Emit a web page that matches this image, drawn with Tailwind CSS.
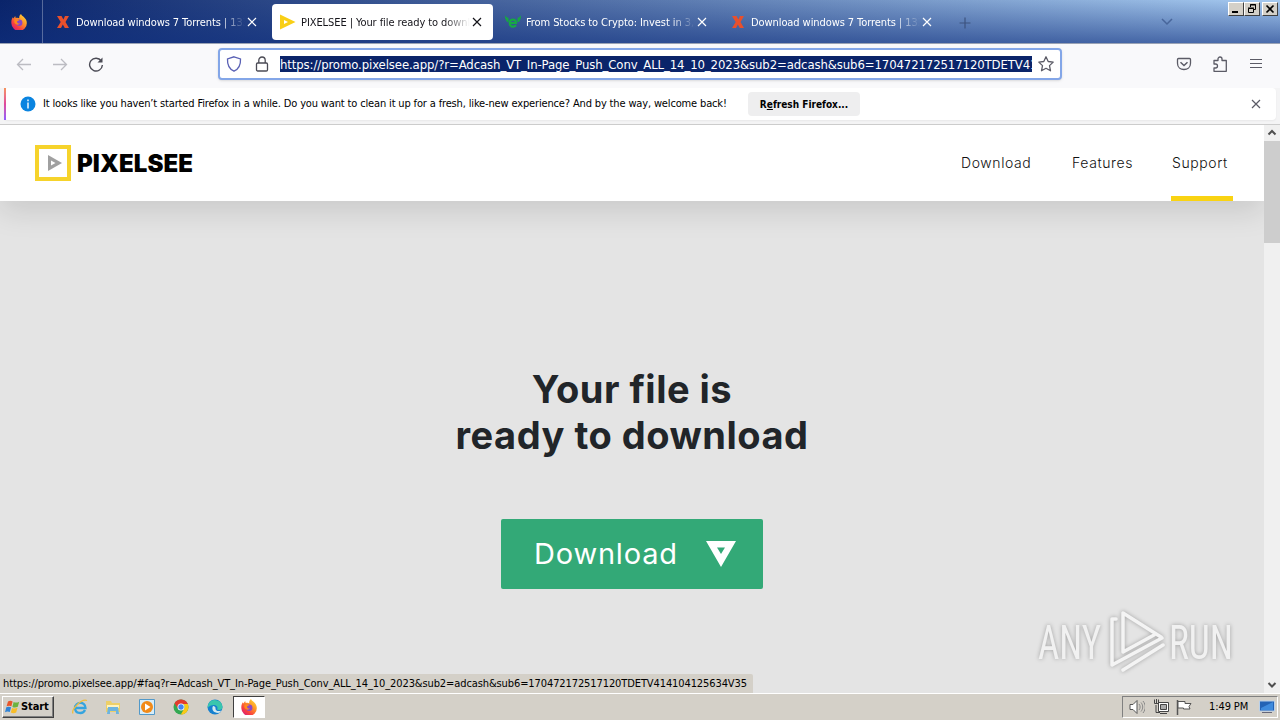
<!DOCTYPE html>
<html lang="en">
<head>
    <meta charset="UTF-8">
    <meta name="viewport" content="width=device-width, initial-scale=1.0">
    <title>PIXELSEE | Your file ready to download</title>
    <script src="https://cdn.jsdelivr.net/npm/@tailwindcss/browser@4"></script>
</head>
<body class="w-[1280px] h-[720px] overflow-hidden flex flex-col bg-[#e4e4e4] font-['DejaVu_Sans_Condensed','DejaVu_Sans',sans-serif] font-stretch-condensed text-[11px] text-black whitespace-nowrap">
    <!-- shared icons -->
    <svg class="absolute w-0 h-0">
        <defs>
            <linearGradient id="flame" x1="1" y1="0" x2="0.2" y2="1">
                <stop offset="0" stop-color="#ffe840"/>
                <stop offset="0.4" stop-color="#ff9a26"/>
                <stop offset="0.75" stop-color="#f9403f"/>
                <stop offset="1" stop-color="#d51c7e"/>
            </linearGradient>
        </defs>
        <symbol id="firefox" viewBox="0 0 16 16">
            <path d="M10 0c.6 1.400 1.700 2 2.800 3.100C14.800 5 15.800 6.800 15.800 9a7.600 7.600 0 0 1-15.400.4c-.3-2.500.3-4.600 1.500-6.100l.5 1.200L4.200 2l.5 2.100c1.300-.6 2.600-.4 3.500.1C8 2.500 8.800 1 10 0z" fill="url(#flame)"/>
            <circle cx="8.200" cy="8.800" r="3.200" fill="#8a48c8"/>
            <path d="M3.500 5.700c2-.8 3.600.2 5.100.6-.8.2-1.400.8-2.600 1.100 0 1.600 1.400 2.400 3 1.900-.8 1.500-2.800 2-4.300.8C3.300 9 3 7.300 3.500 5.700z" fill="#ff8a1c"/>
        </symbol>
        <symbol id="close" viewBox="0 0 10 10">
            <path d="M1 1l8 8M9 1L1 9" fill="none" stroke="currentColor" stroke-width="1.200"/>
        </symbol>
        <symbol id="xfav" viewBox="0 0 16 16">
            <path d="M2 2h4.500L8.400 5.500 10 2h4l-3.500 6L14 14H9.800L7.800 10.400 6 14H2l3.700-6z" fill="#e8502c"/>
        </symbol>
    </svg>

    <!-- tab strip -->
    <div class="h-[44px] shrink-0 flex items-start bg-[linear-gradient(to_bottom,transparent,#0f2f7e99),linear-gradient(to_right,#0a246a,#a6caf0)] border-b border-[#9aa3b5] text-white">
        <div class="w-[43px] h-[43px] flex items-center justify-center border-r border-white/30 pr-1">
            <svg class="w-4 h-4"><use href="#firefox"/></svg>
        </div>
        <div class="flex pl-1 pt-1 gap-1">
            <div class="w-[221px] h-9 flex items-center pl-2">
                <svg class="w-4 h-4"><use href="#xfav"/></svg>
                <span class="ml-[5px] w-[169px] pt-[2px] overflow-hidden tracking-[-0.08px] mask-r-from-85% mask-r-to-100%">Download windows 7 Torrents | 1337x</span>
                <svg class="w-[10px] h-[10px] ml-[2px]"><use href="#close"/></svg>
            </div>
            <div class="w-[221px] h-9 flex items-center pl-2 bg-white text-[#15141a] rounded-sm">
                <svg class="w-4 h-4" viewBox="0 0 16 16"><path d="M0 0.500L15.500 8 0 15.500z" fill="#f9cf16"/><path d="M4 6l4 2-4 2z" fill="#fff"/></svg>
                <span class="ml-[5px] w-[169px] pt-[2px] overflow-hidden tracking-[-0.08px] mask-r-from-85% mask-r-to-100%">PIXELSEE | Your file ready to download</span>
                <svg class="w-[10px] h-[10px] ml-[2px]"><use href="#close"/></svg>
            </div>
            <div class="w-[221px] h-9 flex items-center pl-2">
                <svg class="w-4 h-4" viewBox="0 0 16 16"><path d="M0 1c.7 2 1.800 2.500 3.500 3v4.500C1 7.500-.2 4.500 0 1zM16 1c-.7 2-1.800 2.500-3.500 3v4.500C15 7.500 16.200 4.500 16 1z" fill="#17a844"/><path d="M5 9h6c0-4.600-6.300-4.600-6.300 0 0 4.200 4.300 4.600 6.300 2.300" fill="none" stroke="#17a844" stroke-width="2.200"/></svg>
                <span class="ml-[5px] w-[169px] pt-[2px] overflow-hidden tracking-[-0.08px] mask-r-from-85% mask-r-to-100%">From Stocks to Crypto: Invest in 3,000+</span>
                <svg class="w-[10px] h-[10px] ml-[2px]"><use href="#close"/></svg>
            </div>
            <div class="w-[221px] h-9 flex items-center pl-2">
                <svg class="w-4 h-4"><use href="#xfav"/></svg>
                <span class="ml-[5px] w-[169px] pt-[2px] overflow-hidden tracking-[-0.08px] mask-r-from-85% mask-r-to-100%">Download windows 7 Torrents | 1337x</span>
                <svg class="w-[10px] h-[10px] ml-[2px]"><use href="#close"/></svg>
            </div>
        </div>
        <svg class="w-3 h-3 ml-[16px] mt-[17px]" viewBox="0 0 12 12"><path d="M6 0.500v11M0.500 6h11" stroke="#3d537f" stroke-width="1.200"/></svg>
        <svg class="w-3 h-2 ml-[190px] mt-[18px]" viewBox="0 0 12 8"><path d="M1 1l5 5 5-5" fill="none" stroke="#48669b" stroke-width="1.500"/></svg>
        <div class="flex ml-auto mr-[2px] mt-[2px]">
            <div class="w-4 h-[14px] bg-[#d4d0c8] border border-t-white border-l-white border-r-[#404040] border-b-[#404040]">
                <svg class="w-[14px] h-3" viewBox="0 0 14 12"><path d="M3 8h6v2H3z"/></svg>
            </div>
            <div class="w-4 h-[14px] bg-[#d4d0c8] border border-t-white border-l-white border-r-[#404040] border-b-[#404040]">
                <svg class="w-[14px] h-3" viewBox="0 0 14 12" fill="none" stroke="#000"><path d="M5.500 4V1.500h5v5H9M5 2h6M3.500 5.500h5v4h-5zM3 5h6"/></svg>
            </div>
            <div class="w-4 h-[14px] ml-[2px] bg-[#d4d0c8] border border-t-white border-l-white border-r-[#404040] border-b-[#404040]">
                <svg class="w-[14px] h-3" viewBox="0 0 14 12"><path d="M3.500 2.500l7 7M10.500 2.500l-7 7" stroke="#000" stroke-width="1.700"/></svg>
            </div>
        </div>
    </div>

    <!-- navigation toolbar -->
    <div class="h-[44px] shrink-0 flex items-start bg-[#f9f9fb] text-[#5b5b66]">
        <svg class="w-4 h-4 ml-4 mt-3" viewBox="0 0 16 16" fill="none" stroke="#bcbcc2" stroke-width="1.300"><path d="M15 8.500H1.500M7 3L1.500 8.500 7 14"/></svg>
        <svg class="w-4 h-4 ml-5 mt-3" viewBox="0 0 16 16" fill="none" stroke="#bcbcc2" stroke-width="1.300"><path d="M1 8.500h13.500M9 3l5.500 5.500L9 14"/></svg>
        <svg class="w-4 h-4 ml-5 mt-3" viewBox="0 0 16 16" fill="none" stroke="#4b4b55" stroke-width="1.400"><path d="M13.300 5A6.400 6.400 0 1 0 14.400 9"/><path d="M14.500 1.500v5h-5z" fill="#4b4b55" stroke="none"/></svg>
        <div class="w-[844px] h-[32px] ml-[114px] mt-1 flex items-center bg-white border-2 border-[#83a6e8] rounded-sm shadow-sm">
            <svg class="w-4 h-4 ml-[6px]" viewBox="0 0 16 16" fill="none" stroke="#5a61b5" stroke-width="1.300"><path d="M8 .8l6.500 2.200c.3 5.500-1.700 10-6.500 12.200C3.200 13 1.200 8.500 1.500 3z"/></svg>
            <svg class="w-4 h-4 ml-3" viewBox="0 0 16 16" fill="none" stroke="#4b4b55" stroke-width="1.300"><rect x="2.500" y="7" width="11" height="8" rx="1.200"/><path d="M4.800 7V4.200a3.200 3.200 0 0 1 6.400 0V7"/></svg>
            <div class="w-[752px] h-4 ml-[10px] overflow-hidden bg-[#0a246a] text-white text-[13px] leading-[17px] tracking-[-0.1px]">https://promo.pixelsee.app/?r=Adcash_VT_In-Page_Push_Conv_ALL_14_10_2023&amp;sub2=adcash&amp;sub6=170472172517120TDETV414104125634V35</div>
            <svg class="w-4 h-4 ml-[6px]" viewBox="0 0 16 16" fill="none" stroke="#5b5b66" stroke-width="1.300" stroke-linejoin="round"><path d="M8 .8l2.200 4.700 5 .6-3.700 3.500 1 5.200L8 12.300l-4.500 2.500 1-5.200L.8 6.100l5-.6z"/></svg>
        </div>
        <svg class="w-4 h-4 ml-[114px] mt-[12px]" viewBox="0 0 16 16" fill="none" stroke="#5b5b66" stroke-width="1.300"><path d="M2.500 2.500h11c.7 0 1 .4 1 1v3.700c0 8.400-13 8.400-13 0V3.500c0-.6.4-1 1-1z"/><path d="M4.500 6.200L8 9.500l3.500-3.300" stroke-width="1.500"/></svg>
        <svg class="w-4 h-4 ml-[20px] mt-[12px]" viewBox="0 0 16 16" fill="none" stroke="#5b5b66" stroke-width="1.300" stroke-linejoin="round"><path d="M2 7V4.500h4V3a2 2 0 0 1 4 0v1.500h4.300V15.300H2V12h1.500a2 2 0 0 0 0-4H2z"/></svg>
        <svg class="w-3 h-3 ml-[22px] mt-[14px]" viewBox="0 0 12 12" stroke="#5b5b66" stroke-width="1.200"><path d="M0 1.500h12M0 5.500h12M0 9.500h12"/></svg>
    </div>

    <!-- notification bar -->
    <div class="h-[37px] shrink-0 bg-[#f4f4f5] border-b border-[#cccccc] pl-1 pr-1">
        <div class="h-8 flex items-center bg-white rounded-sm shadow-xs">
            <div class="w-[2px] h-8 bg-linear-to-b from-[#f6935c] via-[#e0489b] to-[#9059ff]"></div>
            <svg class="w-4 h-4 ml-[14px]" viewBox="0 0 16 16"><circle cx="8" cy="8" r="7.500" fill="#0a84e0"/><path d="M8 3.500v1.700M8 6.500v6" stroke="#fff" stroke-width="1.400"/></svg>
            <span class="w-[685px] ml-[7px] tracking-[-0.15px]">It looks like you haven’t started Firefox in a while. Do you want to clean it up for a fresh, like-new experience? And by the way, welcome back!</span>
            <div class="w-28 h-6 ml-5 flex items-center justify-center rounded-sm bg-[#eeeeef] font-bold text-[10px]"><span>R<u>e</u>fresh Firefox...</span></div>
            <svg class="w-[10px] h-[10px] ml-auto mr-[15px] text-[#5b5b66]"><use href="#close"/></svg>
        </div>
    </div>

    <!-- web page -->
    <div class="h-[568px] shrink-0 flex relative">
        <div class="w-[1264px] flex flex-col overflow-hidden bg-[#e4e4e4] font-[Inter,sans-serif]">
            <header class="h-[76px] shrink-0 flex items-start bg-white pl-[35px] shadow-[0_10px_30px_rgba(0,0,0,0.12)]">
                <svg class="w-9 h-9 mt-5" viewBox="0 0 36 36"><path d="M2 2h32v32H2z" fill="#fff" stroke="#f6d32b" stroke-width="4"/><path d="M13 10l14 8-14 8z" fill="#a0a0a0"/><path d="M16 15.500l4.500 2.500-4.500 2.500z" fill="#fff"/></svg>
                <span class="w-[118px] ml-[6px] mt-[23px] text-[24px] leading-[32px] font-black tracking-[0.1px]">PIXELSEE</span>
                <nav class="flex ml-auto mr-[31px] text-[14px] leading-[76px] font-light tracking-[0.6px] text-[#111]">
                    <span class="w-[71px] mr-10">Download</span>
                    <span class="w-[60px] mr-[39px]">Features</span>
                    <span class="w-[62px] h-[76px] pl-px border-b-[5px] border-[#f9d312]">Support</span>
                </nav>
            </header>
            <main class="flex flex-col items-center pt-[165px]">
                <h1 class="text-center text-[38px] leading-[46px] tracking-[0.5px] font-bold text-[#212529]">Your file is<br>ready to download</h1>
                <button class="w-[262px] h-[70px] mt-[61px] flex items-center pl-[34px] rounded-xs bg-[#33a977] text-white text-left text-[29px] tracking-[0.8px]">
                    <span class="w-[144px] -ml-px mr-px">Download</span>
                    <svg class="w-[30px] h-[26px] ml-[27px]" viewBox="0 0 30 26"><path d="M0 0h30L15 26zM11 6.500l4 6.500 4-6.500z" fill="#fff" fill-rule="evenodd"/></svg>
                </button>
            </main>
        </div>
        <!-- scrollbar -->
        <div class="w-4 flex flex-col items-center bg-[#f0f0f0]">
            <svg class="w-4 h-4" viewBox="0 0 16 16"><path d="M4.500 9.500L8 6l3.500 3.500" fill="none" stroke="#505050" stroke-width="2"/></svg>
            <div class="w-4 h-[102px] bg-[#cdcdcd]"></div>
            <svg class="w-4 h-4 mt-auto" viewBox="0 0 16 16"><path d="M4.500 6L8 9.500 11.500 6" fill="none" stroke="#505050" stroke-width="2"/></svg>
        </div>
        <!-- link status -->
        <div class="absolute left-0 bottom-0 w-[753px] h-[19px] pl-[3px] leading-[20px] tracking-[-0.1px] bg-[#d4d0c8] rounded-tr-xs">https://promo.pixelsee.app/#faq?r=Adcash_VT_In-Page_Push_Conv_ALL_14_10_2023&amp;sub2=adcash&amp;sub6=170472172517120TDETV414104125634V35</div>
        <!-- watermark -->
        <svg class="absolute left-[1032px] top-[480px] w-[210px] h-[72px] drop-shadow-[0_0_2px_rgba(0,0,0,0.3)]" viewBox="0 0 210 72" fill="none" stroke="#f4f4f4" stroke-width="4" stroke-linejoin="round" stroke-linecap="round">
            <g font-family="Roboto, sans-serif" font-size="48" fill="#f1f1f1" stroke="none">
                <text x="6" y="54" textLength="63" lengthAdjust="spacingAndGlyphs">ANY</text>
                <text x="137" y="54" textLength="64" lengthAdjust="spacingAndGlyphs">RUN</text>
            </g>
            <path d="M129 32L91 8v39l31-17M84 14h-4v46l50-27M91 65l40-25" stroke-width="3.500"/>
        </svg>
    </div>

    <!-- taskbar -->
    <div class="h-[27px] shrink-0 flex items-start bg-[#d4d0c8] border-t border-white pl-[2px] pr-[2px]">
        <div class="w-[52px] h-[22px] mt-[2px] flex items-center pl-[2px] border border-t-white border-l-white border-r-[#404040] border-b-[#404040] shadow-[inset_-1px_-1px_0_#808080] font-bold">
            <svg class="w-4 h-4" viewBox="0 0 16 16"><path d="M3 2.500c1.700-1 3.200-.8 4.600 0L6.400 7.300c-1.600-.8-3-.8-4.800 0z" fill="#e8562a"/><path d="M8.600 3c1.800.9 3.600.8 5.600-.3l-1.400 5c-1.900 1-3.600 1-5.400.2z" fill="#6cb33f"/><path d="M1.300 8.300c1.800-.8 3.200-.7 4.800 0l-1.300 4.800c-1.500-.8-3-.8-4.800.1z" fill="#2f83d6"/><path d="M7.100 8.900c1.800.8 3.500.7 5.400-.2l-1.300 4.900c-2 .9-3.600.8-5.400 0z" fill="#f8bd28"/></svg>
            <span class="tracking-[-0.1px]">Start</span>
        </div>
        <svg class="w-4 h-4 ml-[18px] mt-[5px]" viewBox="0 0 16 16" fill="none"><path d="M3 9h10.500C13.500 2 3 2.500 3 9c0 6 8 6.500 10 2" stroke="#35a4df" stroke-width="2.300"/><path d="M1 14.500C-1 11 9-.5 15 1.500" stroke="#efbd3e" stroke-width="1.300"/></svg>
        <svg class="w-4 h-4 ml-[17px] mt-[5px]" viewBox="0 0 16 16"><path d="M1 2h5l1 2h8v9H1z" fill="#edcf68"/><path d="M2 6h12v3H2z" fill="#fff3bd"/><path d="M3 8h10l1 7h-3v-3H5v3H2z" fill="#6db4df"/></svg>
        <svg class="w-4 h-4 ml-[18px] mt-[5px]" viewBox="0 0 16 16"><path d="M.5.500h15v15H.5z" fill="#d7edf9" stroke="#5299c9"/><circle cx="8" cy="8" r="6" fill="#f18a18"/><path d="M6 4.500L11.500 8 6 11.500z" fill="#fff"/></svg>
        <svg class="w-4 h-4 ml-[18px] mt-[5px]" viewBox="0 0 16 16"><circle cx="8" cy="8" r="7.500" fill="#33a852"/><path d="M1.500 4.200a7.500 7.500 0 0 1 13.300.8H8a3.500 3.500 0 0 0-3 4.800z" fill="#e33b2e"/><path d="M14.800 5a7.500 7.500 0 0 1-7 10.500L11 10a3.500 3.500 0 0 0-1-5z" fill="#fbc916"/><circle cx="8" cy="8" r="3.500" fill="#fff"/><circle cx="8" cy="8" r="2.700" fill="#4285f4"/></svg>
        <svg class="w-4 h-4 ml-[18px] mt-[5px]" viewBox="0 0 16 16"><circle cx="8" cy="8" r="7.500" fill="#1680cf"/><path d="M1 6a7.500 7.500 0 0 1 14.500 2c0 2.500-2.500 3.500-5.500 2.500 1.500-2-.3-4.500-3-4.500S2 7 .5 9z" fill="#3ac6ad"/><path d="M6 7c-2 4 1 7.500 6.500 6.800l2-2.300c-3 1.300-6.500.5-6-2.500C8.600 8 7.500 7 6 7z" fill="#d4e9ef"/></svg>
        <div class="w-8 h-[22px] ml-[10px] mt-[2px] flex items-center justify-center bg-white border border-t-[#404040] border-l-[#404040] border-r-white border-b-white">
            <svg class="w-4 h-4"><use href="#firefox"/></svg>
        </div>
        <!-- tray -->
        <div class="w-[156px] h-[22px] ml-auto mt-[2px] flex items-center border border-t-[#808080] border-l-[#808080] border-r-white border-b-white">
            <svg class="w-4 h-4 ml-[6px]" viewBox="0 0 16 16" fill="none" stroke="#555"><path d="M1 5.500h3l4-4v13l-4-4H1z" fill="#fff"/><path d="M10 5c1.500 2 1.500 4 0 6M12 3.500c2.300 3 2.300 6 0 9M14 2c3 4 3 8 0 12" stroke="#888"/></svg>
            <svg class="w-4 h-4 ml-2" viewBox="0 0 16 16" stroke="#444"><path d="M5.500 3.500h10v9h-10z" fill="#fff"/><path d="M7.500 5.500h6v5h-6z" fill="#aaa"/><path d="M7 14.500h7M3 6v7.500h4M1.500.5v4h4v-4M3.500 0v5" fill="none"/></svg>
            <svg class="w-4 h-4 ml-[7px]" viewBox="0 0 16 16" stroke="#555"><path d="M1.500 1v15" stroke-width="1.500"/><path d="M2 2.500h7v2h6l-2 3 1 2.500H7.500V9H2z" fill="#fff"/></svg>
            <span class="ml-[17px] w-[40px] pt-px tracking-[-0.1px]">1:49 PM</span>
            <svg class="w-4 h-4 ml-[10px]" viewBox="0 0 16 16"><path d="M.5 2h15v10H.5z" fill="#2463b5" stroke="#b8d0ea"/><path d="M2 9L14 3v8H2z" fill="#3f8bdd"/><path d="M3 13.500h10" stroke="#667"/></svg>
        </div>
    </div>
</body>
</html>
